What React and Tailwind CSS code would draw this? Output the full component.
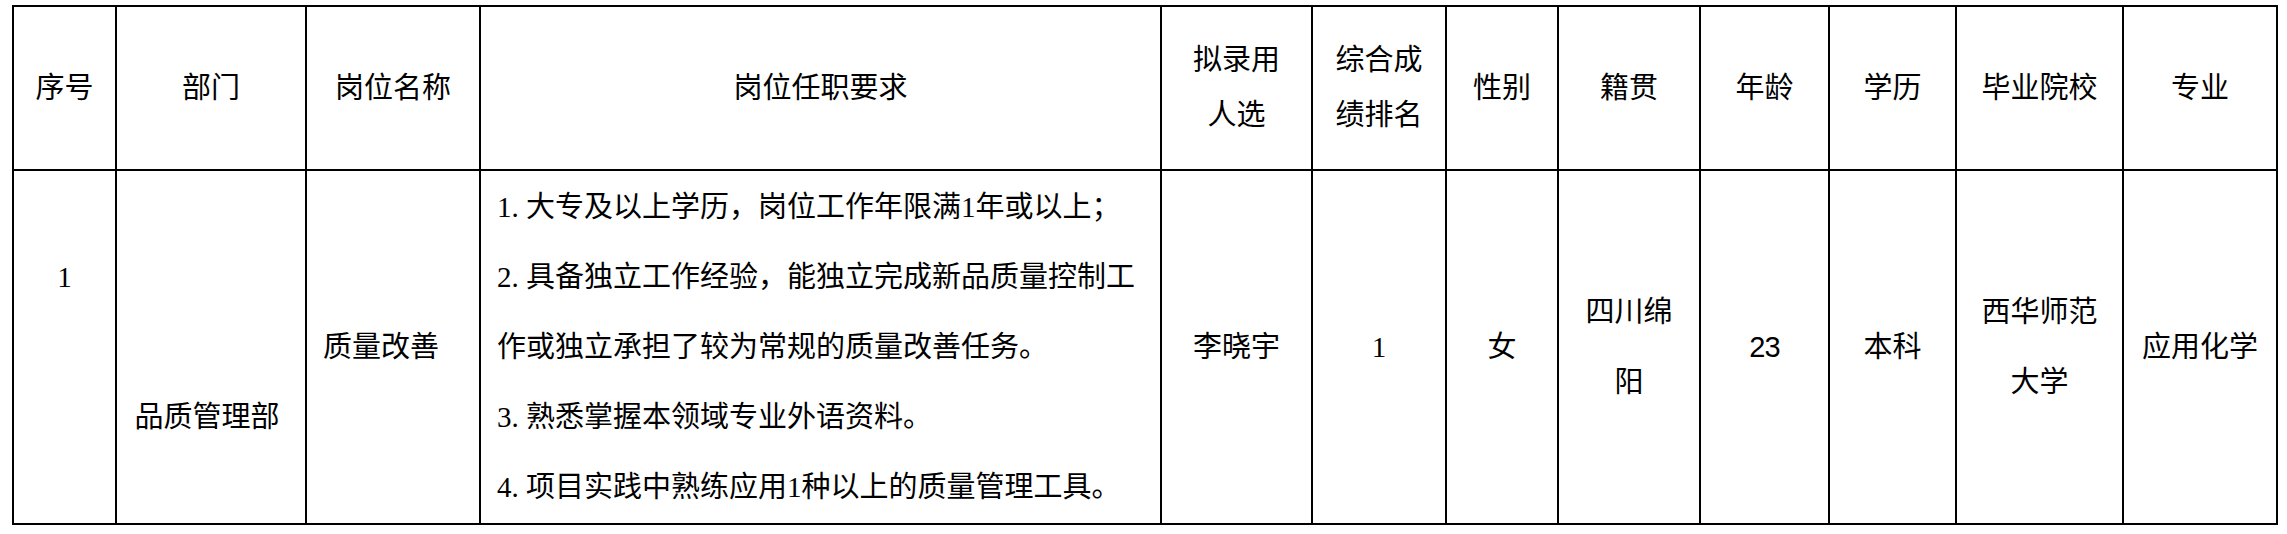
import React from 'react'

const font = { fontFamily: '"Liberation Serif", "Noto Sans CJK SC", serif' }

const heads = [
  ['序号'],
  ['部门'],
  ['岗位名称'],
  ['岗位任职要求'],
  ['拟录用', '人选'],
  ['综合成', '绩排名'],
  ['性别'],
  ['籍贯'],
  ['年龄'],
  ['学历'],
  ['毕业院校'],
  ['专业'],
]

const reqs = [
  ['1.', '大专及以上学历，岗位工作年限满1年或以上；'],
  ['2.', '具备独立工作经验，能独立完成新品质量控制工'],
  ['', '作或独立承担了较为常规的质量改善任务。'],
  ['3.', '熟悉掌握本领域专业外语资料。'],
  ['4.', '项目实践中熟练应用1种以上的质量管理工具。'],
]

function Cell({ lines, className = '' }) {
  return (
    <div className={'bg-white flex flex-col items-center justify-center text-center leading-[70px] ' + className}>
      {lines.map((l, i) => <div key={i} className="whitespace-nowrap">{l}</div>)}
    </div>
  )
}

export default function App() {
  return (
    <div className="w-[2287px] h-[534px] bg-white text-black" style={font}>
      <div className="ml-[12px] pt-[5px]">
        <div className="w-max grid grid-cols-[101px_188px_172px_679px_149px_132px_110px_140px_127px_125px_165px_152px] grid-rows-[162px_352px] gap-[2px] p-[2px] bg-black text-[29px]">
          {heads.map((h, i) => (
            <div key={i} className="bg-white flex flex-col items-center justify-center text-center leading-[55px]">
              {h.map((l, j) => <div key={j} className="whitespace-nowrap">{l}</div>)}
            </div>
          ))}

          {/* 序号 */}
          <div className="bg-white flex justify-center pt-[71px] leading-[70px]">1</div>

          {/* 部门 */}
          <div className="bg-white flex justify-center pt-[211px] pr-[8px] leading-[70px] whitespace-nowrap">品质管理部</div>

          {/* 岗位名称 */}
          <div className="bg-white flex items-center pl-[16px] leading-[70px] whitespace-nowrap">质量改善</div>

          {/* 岗位任职要求 */}
          <div className="bg-white flex flex-col justify-center pl-[16px] leading-[70px]">
            {reqs.map(([n, t], i) => (
              <div key={i} className="whitespace-nowrap">
                {n && <span className="inline-block w-[29px]">{n}</span>}
                {t}
              </div>
            ))}
          </div>

          <Cell lines={['李晓宇']} />
          <Cell lines={['1']} />
          <Cell lines={['女']} />
          <Cell lines={['四川绵', '阳']} />
          <Cell lines={['23']} className="font-['Liberation_Sans'] tracking-[-1px]" />
          <Cell lines={['本科']} />
          <Cell lines={['西华师范', '大学']} />
          <Cell lines={['应用化学']} />
        </div>
      </div>
    </div>
  )
}
